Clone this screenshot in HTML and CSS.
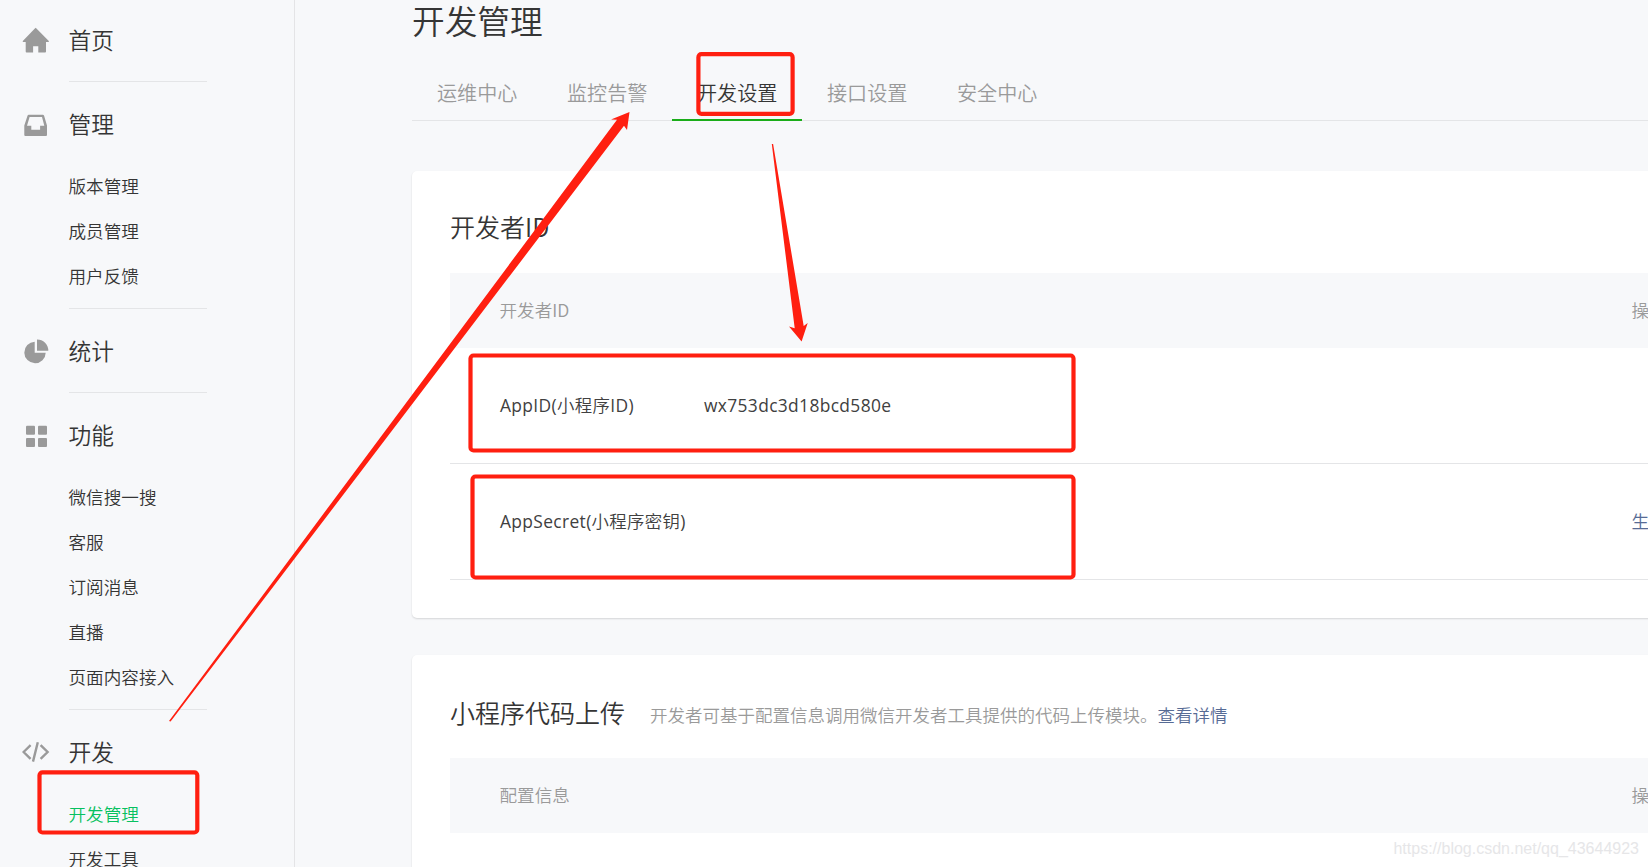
FILE: index.html
```html
<!DOCTYPE html>
<html lang="zh-CN">
<head>
<meta charset="utf-8">
<title>开发管理</title>
<link rel="stylesheet" href="styles.css">
</head>
<body>
<div class="page">
  <nav class="sidebar">
    <section class="group">
      <h2 class="group-title">
        <svg class="icon" viewBox="0 0 28 28"><path d="M13.7 .8 26.8 14v1H24v9.6q0 .9-.9.9h-6.8v-6.3h-5.2v6.3H4.6q-.9 0-.9-.9V15H.8v-1L12.6 1.8z"/></svg><span>首页</span></h2>
    </section>
    <section class="group">
      <h2 class="group-title">
        <svg class="icon" viewBox="0 0 28 28"><path fill-rule="evenodd" d="M6.8 3.8h14q1 0 1.3 1L25 14.6V24q0 1-1 1H3.3q-1 0-1-1v-9.4L5.5 4.8q.3-1 1.3-1zM7.6 6 5 14.8h4.3v3.9h8.8v-3.9h4.2L20 6z"/></svg><span>管理</span></h2>
      <ul class="items"><li>版本管理</li><li>成员管理</li><li>用户反馈</li></ul>
    </section>
    <section class="group">
      <h2 class="group-title">
        <svg class="icon" viewBox="0 0 28 28"><path d="M12.7 3.8v10.9h11A10.7 10.7 0 1 1 12.7 3.8zM15 1.4a11.2 11.2 0 0 1 11.3 11.4H15z"/></svg><span>统计</span></h2>
    </section>
    <section class="group">
      <h2 class="group-title">
        <svg class="icon" viewBox="0 0 28 28"><rect x="4" y="3.7" width="9" height="9" rx="1"/><rect x="16" y="3.7" width="9" height="9" rx="1"/><rect x="4" y="16" width="9" height="9" rx="1"/><rect x="16" y="16" width="9" height="9" rx="1"/></svg><span>功能</span></h2>
      <ul class="items"><li>微信搜一搜</li><li>客服</li><li>订阅消息</li><li>直播</li><li>页面内容接入</li></ul>
    </section>
    <section class="group">
      <h2 class="group-title">
        <svg class="icon line" viewBox="0 0 28 28"><path d="M8.6 6.2 1.6 13l7 6.8M18.6 6.2l7 6.8-7 6.8M15.8 3.2 11 22.6"/></svg><span>开发</span></h2>
      <ul class="items"><li class="current">开发管理</li><li>开发工具</li></ul>
    </section>
  </nav>

  <main class="main">
    <h1 class="title">开发管理</h1>
    <div class="tabs">
      <span class="tab">运维中心</span><span class="tab">监控告警</span><span class="tab active">开发设置</span><span class="tab">接口设置</span><span class="tab">安全中心</span>
    </div>

    <section class="card">
      <h3 class="card-title">开发者ID</h3>
      <div class="row head"><span class="wide">开发者ID</span><span>操</span></div>
      <div class="row"><span class="name">AppID(<span class="cjk">小程序</span>ID)</span><span class="value">wx753dc3d18bcd580e</span></div>
      <div class="row"><span class="name">AppSecret(<span class="cjk">小程序密钥</span>)</span><span class="value"></span><a class="link">生</a></div>
    </section>

    <section class="card">
      <h3 class="card-title">小程序代码上传<span class="hint">开发者可基于配置信息调用微信开发者工具提供的代码上传模块。<a class="link">查看详情</a></span></h3>
      <div class="row head"><span class="wide">配置信息</span><span>操</span></div>
    </section>
  </main>

  <svg class="marks" viewBox="0 0 1648 867">
    <g class="frames">
      <rect x="698.4" y="54.2" width="94.2" height="59.6" rx="3"/>
      <rect x="470.5" y="355.5" width="603" height="95" rx="3"/>
      <rect x="472.5" y="476.5" width="601" height="101" rx="3"/>
      <rect x="39.5" y="772.3" width="157.8" height="60.2" rx="3"/>
    </g>
    <path d="M169 721 617 119.8 611 119.5 629.5 112 627 130 624 125.8 170.6 721.6z"/>
    <path d="M771.8 144h1.3l30.6 182 4-3-6.1 18.5-12.6-15 5.7 1.8z"/>
  </svg>
  <div class="watermark">https://blog.csdn.net/qq_43644923</div>
</div>
</body>
</html>
```
FILE: styles.css
```css
* { box-sizing: border-box; margin: 0; padding: 0; }

body {
  background: #f7f8fa;
  color: #353535;
  font: 350 17.6px/24px "Noto Sans CJK SC", sans-serif;
}

.page {
  position: relative;
  display: flex;
  width: 1648px;
  height: 867px;
  overflow: hidden;
}

.sidebar {
  flex: none;
  width: 295px;
  height: 869px;
  margin-top: -2px;
  border-right: 1px solid #e4e4e6;
}

.group-title {
  display: flex;
  align-items: center;
  gap: 18.5px;
  height: 62px;
  padding: 24px 0 0 22px;
  font-size: 22.7px;
  font-weight: 350;
}
.group-title span { padding-bottom: 2px; }

.icon { flex: none; width: 28px; height: 28px; fill: #9a9a9a; }
.icon.line { fill: none; stroke: #9a9a9a; stroke-width: 2.4; }

.group::after {
  content: "";
  display: block;
  width: 138px;
  margin: 21px 0 0 69px;
  border-bottom: 1px solid #e4e5e7;
}

.items { margin: 20px 0 -12px 68.5px; list-style: none; }
.items li { height: 45px; line-height: 43px; }
.items .current { color: #07c160; }

.main { flex: none; width: 1417px; padding-left: 117px; }

.title {
  height: 66px;
  font-size: 32.7px;
  font-weight: 350;
  line-height: 40px;
}

.tabs { display: flex; height: 55px; border-bottom: 1px solid #e4e5e7; }
.tab {
  width: 130px;
  height: 55px;
  padding: 0 25px;
  color: #9a9a9a;
  font-size: 20.1px;
  line-height: 54px;
  white-space: nowrap;
}
.tab.active { color: #353535; border-bottom: 2px solid #1aad19; }

.card {
  height: 447px;
  margin-top: 50px;
  padding-left: 38px;
  background: #fff;
  border-radius: 5px;
  box-shadow: 0 1px 2px rgba(0, 0, 0, .14);
}
.card + .card { margin-top: 37px; }

.card-title {
  display: flex;
  align-items: center;
  gap: 25px;
  height: 102px;
  padding-top: 8px;
  font-size: 25px;
  font-weight: 350;
  white-space: nowrap;
}
.card + .card .card-title { height: 103px; padding-top: 10px; }
.hint { padding-top: 6px; color: #9a9a9a; font-size: 17.5px; }
.link { color: #576b95; }

.row {
  display: flex;
  height: 116px;
  padding-left: 49.5px;
  border-bottom: 1px solid #e4e5e7;
  line-height: 114px;
}
.row.head {
  height: 75px;
  border: 0;
  background: #f7f8fa;
  color: #9a9a9a;
  line-height: 73px;
}
.wide { flex: none; width: 1132px; }
.name, .value {
  flex: none;
  padding-left: .5px;
  color: #404040;
  font-family: "Open Sans", sans-serif;
  font-size: 17.4px;
  font-weight: 400;
  letter-spacing: .35px;
  white-space: nowrap;
}
.name { width: 204px; }
.value { width: 928px; }
.cjk { font-family: "Noto Sans CJK SC", sans-serif; font-weight: 350; }

.marks { position: absolute; left: 0; top: 0; width: 1648px; height: 867px; fill: #ff1f10; }
.frames { fill: none; stroke: #ff1f10; stroke-width: 4.2; }

.watermark {
  position: absolute;
  right: 9px;
  bottom: 6px;
  color: #e6e6e8;
  font: 400 16px/24px "Liberation Sans", sans-serif;
}
```
